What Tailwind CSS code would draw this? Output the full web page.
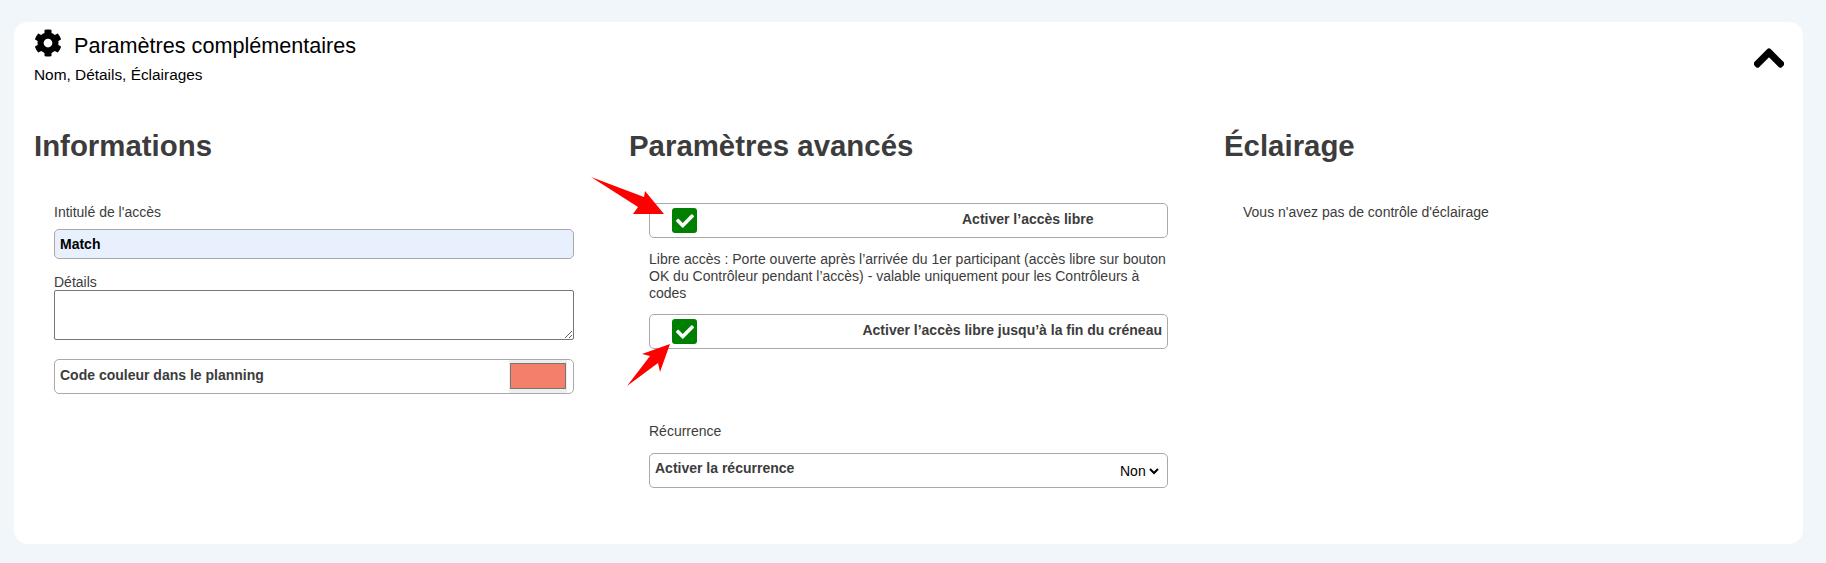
<!DOCTYPE html>
<html lang="fr">
<head>
    <meta charset="UTF-8">
    <title>Paramètres complémentaires</title>
    <script src="https://cdn.jsdelivr.net/npm/@tailwindcss/browser@4"></script>
</head>
<body class="bg-[#f1f6fa] h-[563px] overflow-hidden font-['Liberation_Sans',Arial,sans-serif] text-[14px] text-[#3c3c3c]">
    <div class="relative mx-[14px] mr-[23px] pt-[22px]">
        <section class="bg-white rounded-[14px] h-[522px] pl-[20px] pt-[7px]">
            <!-- entete -->
            <header class="relative h-[101px] text-black">
                <div class="flex items-center h-[32px]">
                    <svg class="w-[28px] h-[28px] mt-[-4px]" viewBox="0 0 512 512" fill="currentColor"><path d="M487.4 315.7l-42.6-24.6c4.3-23.2 4.3-47 0-70.2l42.6-24.6c4.9-2.8 7.1-8.6 5.5-14-11.1-35.6-30-67.8-54.7-94.6-3.8-4.1-10-5.1-14.8-2.3L380.8 110c-17.9-15.4-38.5-27.3-60.8-35.1V25.8c0-5.6-3.9-10.5-9.4-11.7-36.7-8.2-74.3-7.8-109.2 0-5.5 1.2-9.4 6.1-9.4 11.7V75c-22.2 7.9-42.8 19.8-60.8 35.1L88.7 85.5c-4.9-2.8-11-1.9-14.8 2.3-24.7 26.7-43.6 58.9-54.7 94.6-1.7 5.4.6 11.2 5.5 14L67.3 221c-4.3 23.2-4.3 47 0 70.2l-42.6 24.6c-4.9 2.8-7.1 8.6-5.5 14 11.1 35.6 30 67.8 54.7 94.6 3.8 4.1 10 5.1 14.8 2.3l42.6-24.6c17.9 15.4 38.5 27.3 60.8 35.1v49.2c0 5.6 3.9 10.5 9.4 11.7 36.7 8.2 74.3 7.8 109.2 0 5.5-1.2 9.4-6.1 9.4-11.7v-49.2c22.2-7.9 42.8-19.8 60.8-35.1l42.6 24.6c4.9 2.8 11 1.9 14.8-2.3 24.7-26.7 43.6-58.9 54.7-94.6 1.5-5.5-.7-11.3-5.6-14.1zM256 336c-44.1 0-80-35.9-80-80s35.9-80 80-80 80 35.9 80 80-35.9 80-80 80z"/></svg>
                    <h1 class="text-[21.6px] ml-[12px] mt-[2px]">Paramètres complémentaires</h1>
                </div>
                <p class="mt-[2px] text-[15.4px]">Nom, Détails, Éclairages</p>
                <svg class="absolute right-[19px] top-[12px] w-[30px] h-[34px]" viewBox="0 0 448 512" fill="currentColor" stroke="currentColor" stroke-width="24"><path d="M240.971 130.524l194.343 194.343c9.373 9.373 9.373 24.569 0 33.941l-22.667 22.667c-9.357 9.357-24.522 9.375-33.901.04L224 227.495 69.255 381.516c-9.379 9.335-24.544 9.317-33.901-.04l-22.667-22.667c-9.373-9.373-9.373-24.569 0-33.941L207.03 130.525c9.372-9.373 24.568-9.373 33.941-.001z"/></svg>
            </header>

            <div class="grid grid-cols-[595px_595px_1fr]">
                <!-- Informations -->
                <div>
                    <h2 class="text-[29.4px] font-bold leading-[32px] mb-[42px]">Informations</h2>
                    <div class="ml-[20px] w-[520px]">
                        <label class="block leading-[16px]">Intitulé de l'accès</label>
                        <input type="text" value="Match" class="block mt-[9px] w-full h-[30px] px-[5px] rounded-[5px] border border-[#a9a9a9] bg-[#e8f0fe] font-bold text-black text-[14px]">
                        <label class="block leading-[16px] mt-[15px]">Détails</label>
                        <textarea class="block w-full h-[50px] border border-[#767676] rounded-[2px] resize-y"></textarea>
                        <div class="flex items-start justify-between mt-[19px] h-[35px] pl-[5px] pr-[7px] rounded-[5px] border border-[#a9a9a9]">
                            <span class="font-bold mt-[5px]">Code couleur dans le planning</span>
                            <span class="block bg-[#efefef] px-[1px] py-[3px] h-[33px] mr-[-1px]"><span class="block w-[56px] h-[26px] bg-[#f4806b] border border-[#767676]"></span></span>
                        </div>
                    </div>
                </div>

                <!-- Parametres avances -->
                <div>
                    <h2 class="text-[29.4px] font-bold leading-[32px] mb-[41px]">Paramètres avancés</h2>
                    <div class="ml-[20px] w-[519px]">
                        <div class="flex items-start h-[35px] pr-[5px] rounded-[5px] border border-[#a9a9a9]">
                            <span class="flex items-center justify-center shrink-0 w-[25px] h-[25px] mt-[4px] ml-[22px] bg-[#008000] rounded-[3px]">
                                <svg class="w-[18px] h-[18px] text-white" viewBox="0 0 512 512" fill="currentColor"><path d="M173.898 439.404l-166.4-166.4c-9.997-9.997-9.997-26.206 0-36.204l36.203-36.204c9.997-9.998 26.207-9.998 36.204 0L192 312.69 432.095 72.596c9.997-9.997 26.207-9.997 36.204 0l36.203 36.204c9.997 9.997 9.997 26.206 0 36.204l-294.4 294.401c-9.998 9.997-26.207 9.997-36.204-.001z"/></svg>
                            </span>
                            <span class="font-bold mt-[5px] ml-[265px]">Activer l’accès libre</span>
                        </div>
                        <p class="mt-[13px] leading-[17px]">Libre accès : Porte ouverte après l’arrivée du 1er participant (accès libre sur bouton OK du Contrôleur pendant l’accès) - valable uniquement pour les Contrôleurs à codes</p>
                        <div class="flex items-start justify-between h-[35px] mt-[12px] pr-[5px] rounded-[5px] border border-[#a9a9a9]">
                            <span class="flex items-center justify-center shrink-0 w-[25px] h-[25px] mt-[4px] ml-[22px] bg-[#008000] rounded-[3px]">
                                <svg class="w-[18px] h-[18px] text-white" viewBox="0 0 512 512" fill="currentColor"><path d="M173.898 439.404l-166.4-166.4c-9.997-9.997-9.997-26.206 0-36.204l36.203-36.204c9.997-9.998 26.207-9.998 36.204 0L192 312.69 432.095 72.596c9.997-9.997 26.207-9.997 36.204 0l36.203 36.204c9.997 9.997 9.997 26.206 0 36.204l-294.4 294.401c-9.998 9.997-26.207 9.997-36.204-.001z"/></svg>
                            </span>
                            <span class="font-bold mt-[5px]">Activer l’accès libre jusqu’à la fin du créneau</span>
                        </div>
                        <label class="block leading-[16px] mt-[74px]">Récurrence</label>
                        <div class="flex items-start justify-between h-[35px] mt-[14px] pl-[5px] pr-[5px] rounded-[5px] border border-[#a9a9a9]">
                            <span class="font-bold mt-[4px]">Activer la récurrence</span>
                            <select class="text-[14px] text-black mt-[8px] outline-none">
                                <option>Non</option>
                            </select>
                        </div>
                    </div>
                </div>

                <!-- Eclairage -->
                <div>
                    <h2 class="text-[29.4px] font-bold leading-[32px] mb-[42px]">Éclairage</h2>
                    <p class="ml-[19px] leading-[16px]">Vous n'avez pas de contrôle d'éclairage</p>
                </div>
            </div>
        </section>

        <!-- fleches rouges -->
        <svg class="absolute left-[556px] top-[160px] w-[130px] h-[240px]" viewBox="570 160 130 240" fill="#ff0000">
            <path d="M591 177 L644 197 L645 191 L664 214 L633 214 L638 207 Z"/>
            <path d="M627 386 L650 356 L642 354 L670 344 L660 372 L658 363 Z"/>
        </svg>
    </div>
</body>
</html>
